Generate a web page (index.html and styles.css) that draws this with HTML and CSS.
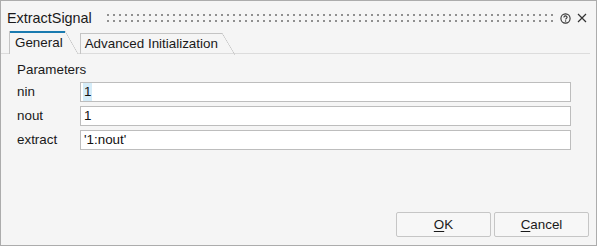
FILE: index.html
```html
<!DOCTYPE html>
<html>
<head>
<meta charset="utf-8">
<link rel="stylesheet" href="styles.css">
</head>
<body>
<div class="window">
  <div class="titlebar">
    <span class="title">ExtractSignal</span>
    <span class="grip"></span>
    <svg class="icon help" width="11" height="11" viewBox="0 0 11 11">
      <circle cx="5.5" cy="5.5" r="4.6" fill="none" stroke="#333" stroke-width="1.1"/>
      <path d="M3.9 4.4 C3.9 3.4 4.6 2.9 5.5 2.9 C6.4 2.9 7.1 3.5 7.1 4.3 C7.1 5.3 5.6 5.4 5.6 6.5" fill="none" stroke="#333" stroke-width="1.1"/>
      <circle cx="5.6" cy="8" r="0.7" fill="#333"/>
    </svg>
    <svg class="icon close" width="10" height="10" viewBox="0 0 10 10">
      <path d="M1 1 L9 9 M9 1 L1 9" stroke="#333" stroke-width="1.2"/>
    </svg>
  </div>
  <div class="tabs">
    <div class="tab active">General</div>
    <div class="tab">Advanced Initialization</div>
  </div>
  <div class="panel">
    <div class="group-title">Parameters</div>
    <div class="form">
      <label class="lbl">nin</label>
      <div class="field"><span class="sel">1</span></div>
      <label class="lbl">nout</label>
      <div class="field">1</div>
      <label class="lbl">extract</label>
      <div class="field">'1:nout'</div>
    </div>
  </div>
  <div class="buttons">
    <button class="btn"><u>O</u>K</button>
    <button class="btn"><u>C</u>ancel</button>
  </div>
</div>
</body>
</html>
```
FILE: styles.css
```css
html, body {
  margin: 0;
  padding: 0;
  background: #f5f5f5;
}
.window {
  width: 597px;
  height: 246px;
  box-sizing: border-box;
  border: 1px solid #acacac;
  background: #f5f5f5;
  display: flex;
  flex-direction: column;
  font-family: "Liberation Sans", Arial, sans-serif;
  font-size: 13.4px;
  color: #1a1a1a;
}
.titlebar {
  height: 30px;
  display: flex;
  align-items: center;
  padding: 0 9px 0 6px;
  box-sizing: border-box;
}
.title {
  font-size: 14.4px;
  color: #1a1a1a;
  line-height: 16px;
  padding-top: 4px;
}
.grip {
  flex: 1;
  height: 8px;
  margin: 4px 6px 0 15px;
  background-image: radial-gradient(circle at 1px 1px, #909090 1px, transparent 1.2px);
  background-size: 6px 6px;
  background-position: 0 0;
}
.icon {
  display: block;
  margin-top: 4px;
}
.help {
  margin-right: 6px;
}
.tabs {
  height: 22px;
  display: flex;
  align-items: flex-end;
  padding-left: 8px;
  margin-right: 6px;
  border-bottom: 1px solid #dcdcdc;
}
.tab {
  position: relative;
  height: 21px;
  line-height: 21px;
  padding: 0 17px 0 5px;
  border-left: 1px solid #c4c4c4;
  margin-bottom: -1px;
  margin-right: 2px;
  color: #1a1a1a;
  background: linear-gradient(#c4c4c4, #c4c4c4) top left / calc(100% - 13px) 1px no-repeat;
}
.tab::after {
  content: "";
  position: absolute;
  top: 0;
  right: 0;
  width: 13px;
  height: 22px;
  background: linear-gradient(to top right, transparent calc(50% - 0.6px), #c4c4c4 50%, transparent calc(50% + 0.6px));
}
.tab.active {
  height: 23px;
  line-height: 24px;
  padding-right: 15px;
  background: linear-gradient(#1a7bb0, #1a7bb0) top left / calc(100% - 13px) 2px no-repeat, #f5f5f5;
  z-index: 1;
}
.tab.active::after {
  height: 23px;
}
.tab + .tab {
  padding-left: 4px;
}
.panel {
  padding: 8px 25px 0 16px;
}
.group-title {
  line-height: 16px;
  margin-bottom: 4px;
}
.form {
  display: grid;
  grid-template-columns: 63px 1fr;
  row-gap: 4px;
  align-items: center;
}
.lbl {
  line-height: 20px;
}
.field {
  height: 20px;
  box-sizing: border-box;
  border: 1px solid #bdbdbd;
  background: #fff;
  padding-left: 3px;
  line-height: 18px;
  color: #111;
}
.sel {
  background: #d5ecf8;
  display: inline-block;
  padding: 0 1px;
  margin-left: -1px;
}
.buttons {
  margin-top: auto;
  display: flex;
  justify-content: flex-end;
  gap: 3px;
  padding: 0 7px 8px 0;
}
.btn {
  width: 95px;
  height: 25px;
  box-sizing: border-box;
  border: 1px solid #c6c6c6;
  border-radius: 2px;
  background: #f7f7f7;
  font-family: "Liberation Sans", Arial, sans-serif;
  font-size: 13.4px;
  color: #1a1a1a;
  padding: 0;
}
.btn u {
  text-underline-offset: 2px;
}
```
